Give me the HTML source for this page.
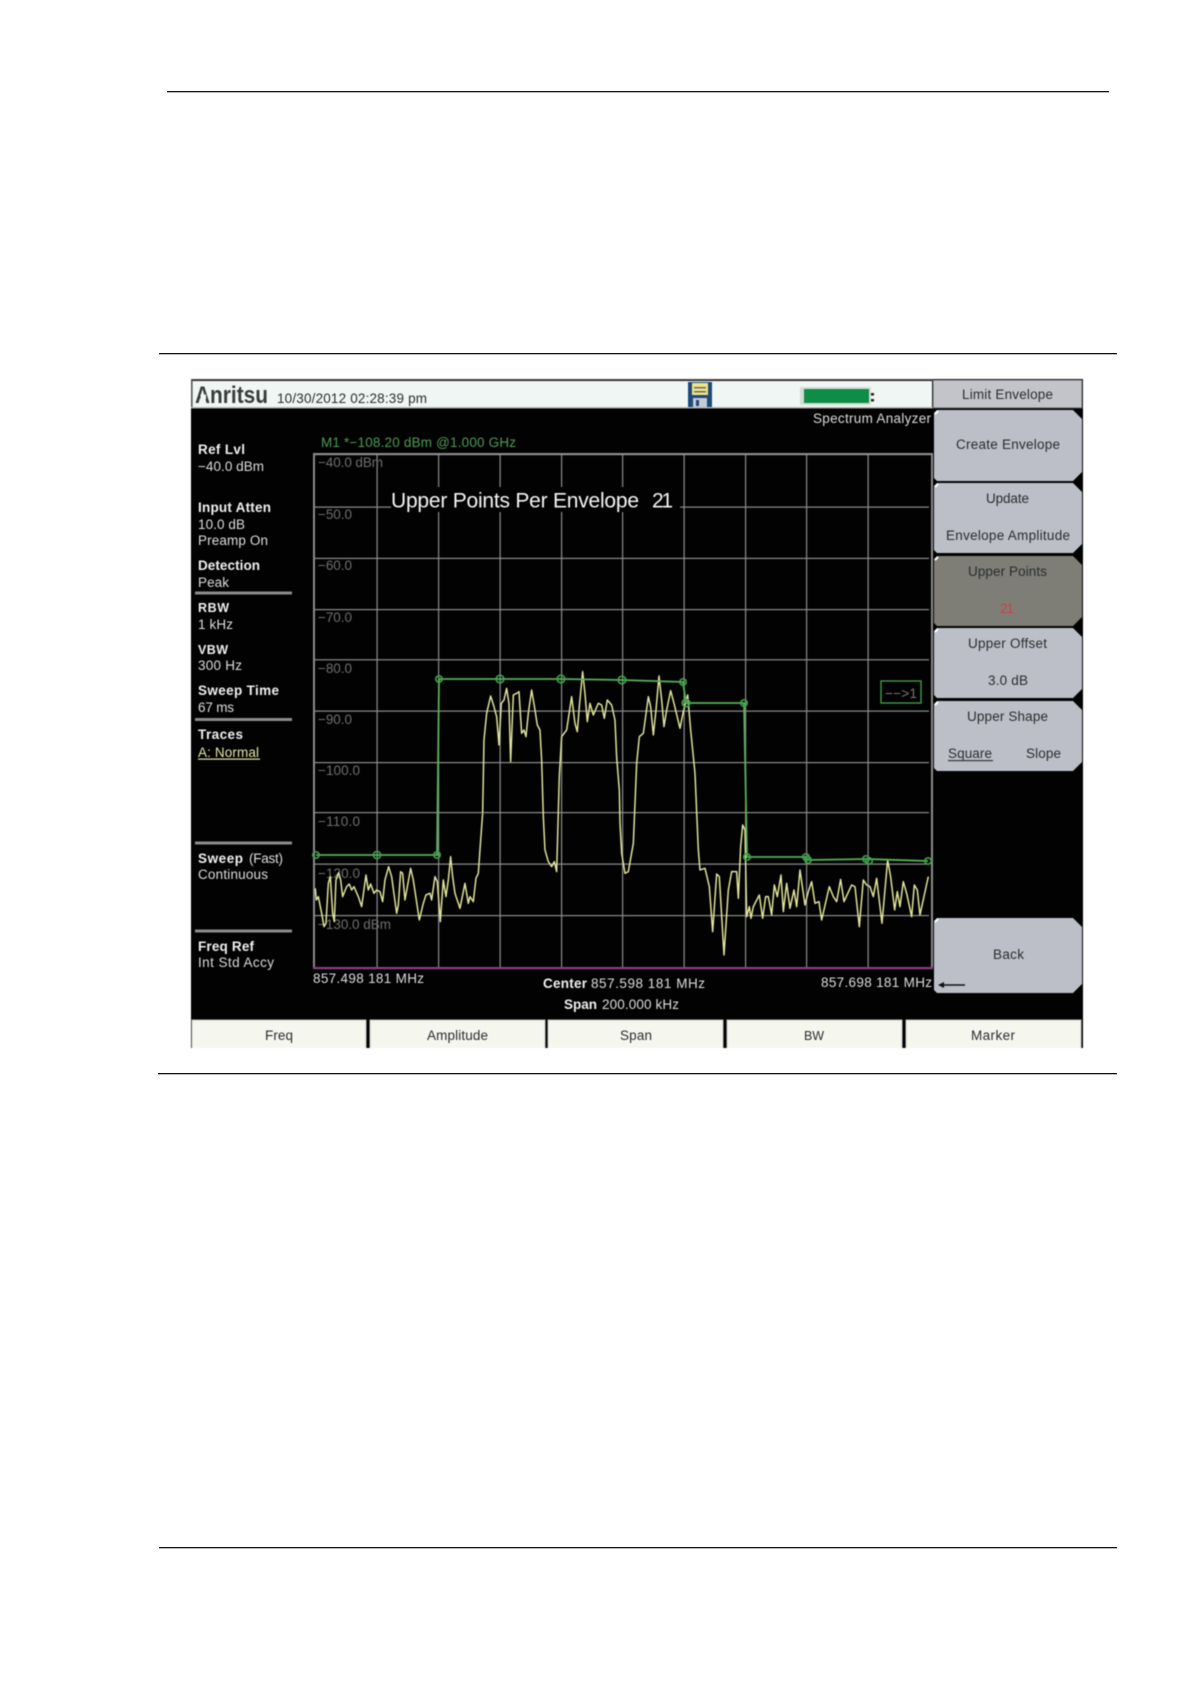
<!DOCTYPE html>
<html><head><meta charset="utf-8"><title>Limit Envelope</title>
<style>
html,body{margin:0;padding:0;background:#fff;width:1191px;height:1684px;overflow:hidden}
svg{display:block;position:absolute;left:0;top:0}
text{font-family:"Liberation Sans",sans-serif;font-size:13.5px;white-space:pre}
.b{font-weight:700}
.w text,.w{fill:#dcdcdc}
.h{fill:#f0f0f0}
.g{fill:#6f6f6f}
.k{fill:#2a2c30}
.soft{filter:blur(.45px)}
</style></head><body>
<svg width="1191" height="1684" viewBox="0 0 1191 1684" xmlns="http://www.w3.org/2000/svg">
<rect x="167" y="91" width="942" height="1.3" fill="#111"/>
<rect x="159" y="353" width="958" height="1.3" fill="#111"/>
<rect x="158" y="1073" width="959" height="1.3" fill="#111"/>
<rect x="159" y="1547" width="958" height="1.3" fill="#111"/>

<g class="soft">
<rect x="191" y="379" width="892" height="669" fill="#020202"/>
<!-- header -->
<rect x="192" y="381" width="740" height="27" fill="#f0f6f3"/>
<rect x="191" y="379" width="742" height="1.6" fill="#444"/>
<rect x="191" y="379" width="1.6" height="29" fill="#555"/>
<rect x="191" y="407" width="742" height="1.4" fill="#b8b8b8"/>
<text x="195" y="403" class="b" style="font-size:24px" fill="#3a3c3c" textLength="73" lengthAdjust="spacingAndGlyphs">Anritsu</text>
<rect x="200.5" y="394.6" width="5.5" height="4.6" fill="#f0f6f3"/>
<text x="277" y="403" class="k" textLength="150">10/30/2012 02:28:39 pm</text>
<!-- disk icon -->
<rect x="688" y="382" width="24" height="25" fill="#1d4a78"/>
<rect x="692" y="383" width="16" height="12" fill="#f1e38c"/>
<rect x="694" y="387" width="12" height="1.5" fill="#6b6b55"/>
<rect x="694" y="391" width="12" height="1.5" fill="#6b6b55"/>
<rect x="693" y="398" width="14" height="9" fill="#c4ccd6"/>
<rect x="696" y="400" width="3" height="6" fill="#1d4a78"/>
<!-- battery -->
<rect x="800" y="387" width="71" height="18" fill="#d5dcd6"/>
<rect x="804" y="389" width="65" height="14" fill="#0f8c47"/>
<rect x="871" y="393" width="3" height="2.5" fill="#222"/>
<rect x="871" y="399" width="3" height="2.5" fill="#222"/>

<!-- grid -->
<g fill="#8c8c8c">
<rect x="313" y="453" width="619" height="2.2"/>
<rect x="313" y="453" width="2" height="515"/>
<rect x="931" y="453" width="2" height="516"/>
<rect x="315" y="506.5" width="614" height="1.2"/>
<rect x="315" y="557.8" width="614" height="1.2"/>
<rect x="315" y="609" width="614" height="1.2"/>
<rect x="315" y="659.2" width="614" height="1.2"/>
<rect x="315" y="710.5" width="614" height="1.2"/>
<rect x="315" y="762" width="614" height="1.2"/>
<rect x="315" y="812" width="614" height="1.2"/>
<rect x="315" y="863.5" width="614" height="1.2"/>
<rect x="315" y="915" width="614" height="1.2"/>
<rect x="376.5" y="454" width="1.2" height="514"/>
<rect x="438" y="454" width="1.2" height="514"/>
<rect x="499.5" y="454" width="1.2" height="514"/>
<rect x="561" y="454" width="1.2" height="514"/>
<rect x="622" y="454" width="1.2" height="514"/>
<rect x="683.5" y="454" width="1.2" height="514"/>
<rect x="745" y="454" width="1.2" height="514"/>
<rect x="806" y="454" width="1.2" height="514"/>
<rect x="867.5" y="454" width="1.2" height="514"/>
</g>
<rect x="313" y="967" width="620" height="2.2" fill="#8b3f88"/>
<rect x="391" y="487" width="289" height="25" fill="#020202"/>

<!-- plot labels -->
<g class="g">
<text x="318" y="467" textLength="65">−40.0 dBm</text>
<text x="318" y="519" textLength="34">−50.0</text>
<text x="318" y="570" textLength="34">−60.0</text>
<text x="318" y="622" textLength="34">−70.0</text>
<text x="318" y="673" textLength="34">−80.0</text>
<text x="318" y="724" textLength="34">−90.0</text>
<text x="318" y="775" textLength="42">−100.0</text>
<text x="318" y="826" textLength="42">−110.0</text>
<text x="318" y="878" textLength="42">−120.0</text>
<text x="318" y="929" textLength="73">−130.0 dBm</text>
</g>

<!-- trace -->
<g fill="none" stroke="#e2e59c" stroke-width="4.4" stroke-linejoin="round">
<polyline transform="translate(150 740) scale(.3333)" points="496,445 499,480 505,470 515,520 522,560 528,550 535,430 541,410 548,520 553,545 558,420 566,398 572,420 578,470 590,440 598,432 605,450 612,440 625,470 635,500 648,405 655,450 662,432 672,460 680,450 690,455 698,485 705,420 716,380 725,410 740,520 745,495 752,395 758,400 765,480 782,385 790,420 808,540 820,490 828,465 840,460 845,480 855,410 862,425 871,545 880,420 888,470 895,420 902,350 908,410 915,460 930,505 945,430 955,490 960,470 970,485 978,415 985,400 990,330 998,220"/>
<polyline transform="translate(300 650) scale(.3333)" points="548,489 552,270 560,190 572,138 582,170 590,200 597,285 604,160 612,150 620,115 627,160 632,335 640,135 650,130 657,125 665,250 672,240 678,260 685,190 695,120 705,180 712,225 720,240 725,330 730,500 735,600 745,635 755,650 763,635 770,665 778,380 785,260 800,240 815,140 825,220 832,245 838,170 848,65 855,130 862,215 870,160 880,195 895,160 905,165 913,205 922,150 935,165 945,210 950,320 958,420"/>
<polyline transform="translate(620 650) scale(.3333)" points="-2,420 0,520 5,610 15,670 25,665 40,580 50,340 58,260 70,250 85,140 92,170 100,255 108,180 117,78 125,150 132,230 140,180 152,122 162,160 180,235 190,185 203,135 212,240 225,370 235,600 240,660 255,655 268,710 278,845 290,672 298,680 312,915 325,720 335,665 350,665 355,745 362,590 368,525 375,540 380,800 388,770 393,805 400,770 418,735 428,805 437,740 445,740 455,795 463,705 472,740 483,675 490,785 500,700 510,775 522,720 530,770 540,660 555,765 565,725 575,695 585,760 597,755 605,810 628,710 640,740 650,755 662,688 672,755 695,705 705,710 718,830 730,690 740,705 750,710 760,740 770,685 786,820 803,630 812,680 824,780 832,725 840,770 850,695 860,730 875,800 883,705 892,720 900,795 925,680"/>
</g>

<!-- envelope -->
<polyline fill="none" stroke="#55b058" stroke-width="1.8" points="316,855 437,855 439,679 561,679 622,680 683,682 686,703 744,703 747,857 806,857 807,860 867,859 928,861"/>
<g fill="none" stroke="#3f9e4a" stroke-width="1.7">
<circle cx="316" cy="855" r="3.2"/><circle cx="377" cy="855" r="3.6"/><circle cx="437" cy="855" r="3.2"/>
<circle cx="439" cy="679" r="3.2"/><circle cx="500" cy="679" r="3.8"/><circle cx="561" cy="679" r="3.8"/><circle cx="622" cy="680" r="3.8"/><circle cx="683" cy="682" r="3.2"/>
<circle cx="686" cy="703" r="3.8"/><circle cx="744" cy="703" r="3.2"/>
<circle cx="747" cy="857" r="3.2"/><circle cx="806" cy="857" r="3.2"/><circle cx="808" cy="860" r="3.2"/><circle cx="866" cy="859" r="3.2"/><circle cx="869" cy="861" r="3.2"/><circle cx="928" cy="861" r="3.2"/>
</g>
<rect x="881" y="681" width="40" height="22" fill="none" stroke="#3d9a48" stroke-width="1.4"/>
<text x="885" y="698" fill="#777" textLength="32">−−&gt;1</text>

<!-- left column -->
<g fill="#8b8b8b">
<rect x="195" y="591.5" width="97" height="3"/>
<rect x="195" y="718" width="97" height="3"/>
<rect x="195" y="841.5" width="97" height="3"/>
<rect x="195" y="929.5" width="97" height="3"/>
</g>
<text x="198" y="454" class="b h" textLength="47">Ref Lvl</text>
<text x="198" y="471" class="w" textLength="66">−40.0 dBm</text>
<text x="198" y="512" class="b h" textLength="73">Input Atten</text>
<text x="198" y="529" class="w" textLength="47">10.0 dB</text>
<text x="198" y="545" class="w" textLength="70">Preamp On</text>
<text x="198" y="570" class="b h" textLength="62">Detection</text>
<text x="198" y="587" class="w" textLength="31">Peak</text>
<text x="198" y="612" class="b h" style="font-size:12.5px" textLength="31">RBW</text>
<text x="198" y="629" class="w" textLength="35">1 kHz</text>
<text x="198" y="654" class="b h" style="font-size:12.5px" textLength="30">VBW</text>
<text x="198" y="670" class="w" textLength="44">300 Hz</text>
<text x="198" y="695" class="b h" textLength="81">Sweep Time</text>
<text x="198" y="712" class="w" textLength="36">67 ms</text>
<text x="198" y="739" class="b h" textLength="45">Traces</text>
<text x="198" y="757" fill="#e4e6a8" textLength="61">A: Normal</text>
<rect x="198" y="758.5" width="62" height="1.2" fill="#e4e6a8"/>
<text x="198" y="863" class="b h" textLength="45">Sweep</text>
<text x="249" y="863" class="w" textLength="34">(Fast)</text>
<text x="198" y="879" class="w" textLength="70">Continuous</text>
<text x="198" y="951" class="b h" textLength="56">Freq Ref</text>
<text x="198" y="967" class="w" textLength="76">Int Std Accy</text>

<!-- top texts -->
<text x="321" y="447" fill="#4e9c57" textLength="195">M1 *−108.20 dBm @1.000 GHz</text>
<text x="813" y="423" class="w" textLength="118">Spectrum Analyzer</text>
<text x="391" y="507.5" fill="#f4f4f4" style="font-size:21px" textLength="248">Upper Points Per Envelope</text>
<text x="652" y="507.5" fill="#f4f4f4" style="font-size:21px" textLength="21">21</text>

<!-- bottom texts -->
<text x="313" y="983" class="w" textLength="111">857.498 181 MHz</text>
<text x="543" y="988" class="b h" textLength="44">Center</text>
<text x="591" y="988" class="w" textLength="114">857.598 181 MHz</text>
<text x="821" y="987" class="w" textLength="111">857.698 181 MHz</text>
<text x="564" y="1009" class="b h" textLength="33">Span</text>
<text x="602" y="1009" class="w" textLength="77">200.000 kHz</text>

<!-- softkeys -->
<rect x="933" y="380" width="149" height="28" fill="#c2c4ca" stroke="#555" stroke-width="1"/>
<g fill="#bcbfc7">
<polygon points="937,410 1073,410 1082,419 1082,472 1073,481 937,481 934,478 934,413"/>
<polygon points="937,483 1073,483 1082,492 1082,544 1073,553 937,553 934,550 934,486"/>
<polygon fill="#7e7e76" points="937,556 1073,556 1082,565 1082,617 1073,626 937,626 934,623 934,559"/>
<polygon points="937,628 1073,628 1082,637 1082,689 1073,698 937,698 934,695 934,631"/>
<polygon points="937,701 1073,701 1082,710 1082,762 1073,771 937,771 934,768 934,704"/>
<polygon points="937,918 1073,918 1082,927 1082,984 1073,993 937,993 934,990 934,921"/>
</g>
<g stroke="#fff" stroke-width="2" fill="none">
<path d="M935 414L938 411"/><path d="M935 487L938 484"/><path d="M935 560L938 557"/><path d="M935 632L938 629"/><path d="M935 705L938 702"/><path d="M935 922L938 919"/>
</g>
<g class="k">
<text x="962" y="399" textLength="91">Limit Envelope</text>
<text x="956" y="449" textLength="104">Create Envelope</text>
<text x="986" y="503" textLength="43">Update</text>
<text x="946" y="540" textLength="124">Envelope Amplitude</text>
<text x="968" y="576" textLength="79">Upper Points</text>
<text x="968" y="648" textLength="79">Upper Offset</text>
<text x="988" y="685" textLength="40">3.0 dB</text>
<text x="967" y="721" textLength="81">Upper Shape</text>
<text x="948" y="758" textLength="44">Square</text>
<text x="1026" y="758" textLength="35">Slope</text>
<text x="993" y="959" textLength="31">Back</text>
</g>
<rect x="948" y="760" width="45" height="1.2" fill="#33363a"/>
<text x="1000" y="613" fill="#c8404c" textLength="14">21</text>
<path d="M943 985H965" stroke="#111" stroke-width="1.6"/>
<polygon points="938,985 944,982 944,988" fill="#111"/>

<!-- bottom buttons -->
<g fill="#f5f6ee" stroke="#bdbdbd" stroke-width="1">
<rect x="192" y="1020" width="174" height="30"/>
<rect x="370" y="1020" width="175" height="30"/>
<rect x="548" y="1020" width="175" height="30"/>
<rect x="727" y="1020" width="175" height="30"/>
<rect x="906" y="1020" width="175" height="30"/>
</g>
<g class="k">
<text x="265" y="1040" textLength="28">Freq</text>
<text x="427" y="1040" textLength="61">Amplitude</text>
<text x="620" y="1040" textLength="32">Span</text>
<text x="804" y="1040" style="font-size:12.5px" textLength="20">BW</text>
<text x="971" y="1040" textLength="44">Marker</text>
</g>
<rect x="150" y="1048" width="1000" height="8" fill="#fff"/>
</g>
</svg>
</body></html>
